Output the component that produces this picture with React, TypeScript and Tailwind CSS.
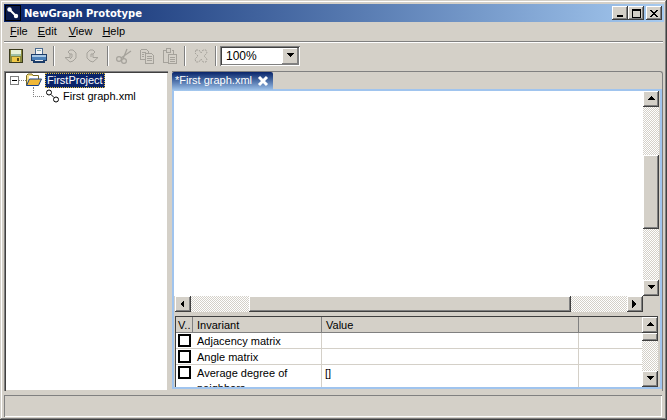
const raised = "shadow-[inset_-1px_-1px_0_#404040,inset_1px_1px_0_#ffffff,inset_-2px_-2px_0_#808080]";

function Arrow({ dir }: { dir: "up" | "down" | "left" | "right" }) {
  const pts = { up: "4,1 0,5 8,5", down: "0,1 8,1 4,5", left: "5,0 5,8 1,4", right: "1,0 1,8 5,4" }[dir];
  return (
    <svg width="8" height="8" viewBox="0 0 8 8" className="block" shapeRendering="crispEdges">
      <polygon points={pts} fill="#000" />
    </svg>
  );
}

function ScrollBtn({ dir }: { dir: "up" | "down" | "left" | "right" }) {
  return (
    <div className={`w-4 h-4 shrink-0 bg-[#d4d0c8] flex items-center justify-center ${raised}`}>
      <Arrow dir={dir} />
    </div>
  );
}

const checker = "bg-[repeating-conic-gradient(#d4d0c8_0_25%,#ffffff_0_50%)] bg-[length:2px_2px]";

function CapBtn({ children, className = "" }: { children: React.ReactNode; className?: string }) {
  return <div className={`w-4 h-[14px] bg-[#d4d0c8] flex items-center justify-center ${raised} ${className}`}>{children}</div>;
}

function Sep() {
  return <div className="w-[2px] h-[20px] mx-[3px] bg-[#808080] border-r border-white" />;
}

function Slot({ children }: { children: React.ReactNode }) {
  return <div className="w-[23px] flex justify-center">{children}</div>;
}

function Save() {
  return (
    <svg width="16" height="16" viewBox="0 0 16 16" shapeRendering="crispEdges">
      <rect x="1.5" y="1.5" width="13" height="13" fill="#8a8a3c" stroke="#3a3a1c" />
      <rect x="3" y="2" width="10" height="4" fill="#e8f0d8" />
      <rect x="3" y="6" width="10" height="2" fill="#9fc0a8" />
      <rect x="4" y="9" width="8" height="5" fill="#f0c848" />
      <rect x="9" y="10" width="2" height="3" fill="#5a4a10" />
    </svg>
  );
}

function Printer() {
  return (
    <svg width="16" height="16" viewBox="0 0 16 16" shapeRendering="crispEdges">
      <rect x="4.5" y="0.5" width="7" height="6" fill="#f4f4f4" stroke="#4a6a90" />
      <rect x="6" y="2" width="4" height="1" fill="#88aaaa" />
      <rect x="0.5" y="6.5" width="15" height="6" fill="#4a80b8" stroke="#1c3c68" />
      <rect x="1" y="7" width="14" height="2" fill="#a8c8e4" />
      <rect x="2" y="12" width="12" height="3" fill="#1c3c68" />
      <rect x="4" y="12" width="8" height="1" fill="#e8e8e8" />
    </svg>
  );
}

const dis = { fill: "none", stroke: "#a5a29b", strokeWidth: 1 };

function Undo() {
  return (
    <svg width="16" height="16" viewBox="0 0 16 16">
      <path d="M8 2 L11 2 L14 5 L14 10 L11 13 L8 14 L3 9.5 L8 9.5 L8 6 L10 6 L10 9 L8 11 M8 2 L6 4 L8 6" {...dis} />
    </svg>
  );
}
function Redo() {
  return (
    <svg width="16" height="16" viewBox="0 0 16 16">
      <path d="M8 2 L5 2 L2 5 L2 10 L5 13 L8 14 L13 9.5 L8 9.5 L8 6 L6 6 L6 9 M8 2 L10 4 L8 6" {...dis} />
    </svg>
  );
}
function Cut() {
  return (
    <svg width="16" height="16" viewBox="0 0 16 16">
      <circle cx="3" cy="11" r="2.4" {...dis} strokeWidth={1.2} />
      <circle cx="8" cy="13" r="2.4" {...dis} strokeWidth={1.2} />
      <path d="M5 10 L15 3 M7 11 L11 1" {...dis} strokeWidth={1.3} />
    </svg>
  );
}
function Copy() {
  return (
    <svg width="16" height="16" viewBox="0 0 16 16" shapeRendering="crispEdges">
      <path d="M1.5 1.5 H7.5 L9.5 3.5 V5.5 M1.5 1.5 V11.5 H6.5 M6.5 5.5 H12.5 L14.5 7.5 V15.5 H6.5 Z M3 4.5 H7 M3 6.5 H5 M3 8.5 H5 M8 8.5 H13 M8 10.5 H13 M8 12.5 H13" {...dis} />
    </svg>
  );
}
function Paste() {
  return (
    <svg width="16" height="16" viewBox="0 0 16 16" shapeRendering="crispEdges">
      <path d="M3.5 2.5 H1.5 V14.5 H6 M9.5 2.5 H11.5 V6 M4.5 0.5 H8.5 V4.5 H4.5 Z M6.5 6.5 H14.5 V15.5 H6.5 Z M8 9.5 H13 M8 11.5 H13 M8 13.5 H13" {...dis} />
    </svg>
  );
}
function Del() {
  return (
    <svg width="16" height="16" viewBox="0 0 16 16">
      <path d="M3 2 L6 2 L8 5 L10 2 L13 2 L14 5 L11 8 L14 11 L13 14 L10 14 L8 11 L6 14 L3 14 L2 11 L5 8 L2 5 Z" fill="none" stroke="#a5a29b" strokeWidth="1" strokeDasharray="2 1" />
    </svg>
  );
}

function Row({ name, value, tall }: { name: string; value?: string; tall?: boolean }) {
  return (
    <div className={`flex shrink-0 border-b border-[#d4d0c8] ${tall ? "h-[32px]" : "h-[16px]"}`}>
      <div className="w-[17px] shrink-0 pl-[2px] pt-[1px]">
        <div className="w-[13px] h-[13px] border-2 border-black bg-white" />
      </div>
      <div className="w-[129px] shrink-0 pl-[4px] pr-2 pt-px border-r border-[#d4d0c8] leading-[15px] overflow-hidden">{name}</div>
      <div className="w-[257px] shrink-0 pl-[3px] pt-[1px] border-r border-[#d4d0c8] leading-[15px]">{value}</div>
      <div className="flex-1" />
    </div>
  );
}

export default function App() {
  return (
    <div className="w-[667px] h-[420px] overflow-hidden bg-[#d4d0c8] text-black text-[11px] font-['Liberation_Sans',Arial,sans-serif] p-[4px] pb-[2px] flex flex-col shadow-[inset_-1px_-1px_0_#404040,inset_1px_1px_0_#d4d0c8,inset_-2px_-2px_0_#808080,inset_2px_2px_0_#ffffff]">
      {/* title bar */}
      <div className="h-[18px] mr-[-1px] shrink-0 flex items-center bg-gradient-to-r from-[#0a246a] to-[#a6caf0] pl-[1px] pr-[2px]">
        <div className="w-[16px] h-[16px] bg-[#0a1a4a] border border-black flex items-center justify-center">
          <svg width="14" height="14" viewBox="0 0 14 14">
            <line x1="3.5" y1="3.5" x2="10" y2="10" stroke="#fff" strokeWidth="2" />
            <circle cx="3.5" cy="3.5" r="2.2" fill="#fff" />
            <circle cx="10" cy="10" r="2.2" fill="#fff" />
          </svg>
        </div>
        <span className="ml-[3px] text-white font-bold text-[10px] font-['DejaVu_Sans',sans-serif]">NewGraph Prototype</span>
        <div className="ml-auto flex">
          <CapBtn>
            <div className="w-[6px] h-[2px] bg-black mt-[6px] mr-[1px]" />
          </CapBtn>
          <CapBtn>
            <div className="w-[9px] h-[9px] border border-black border-t-2" />
          </CapBtn>
          <CapBtn className="ml-[2px]">
            <svg width="8" height="7" viewBox="0 0 8 7" shapeRendering="crispEdges">
              <path d="M0 0 L8 7 M8 0 L0 7" stroke="#000" strokeWidth="1.5" />
            </svg>
          </CapBtn>
        </div>
      </div>

      {/* menu */}
      <div className="h-[20px] shrink-0 flex items-center gap-[10px] pl-[6px] border-b border-[#808080] shadow-[0_1px_0_#ffffff]">
        <span><u>F</u>ile</span>
        <span><u>E</u>dit</span>
        <span className="ml-[2px]"><u>V</u>iew</span>
        <span><u>H</u>elp</span>
      </div>

      {/* toolbar */}
      <div className="h-[27px] shrink-0 flex items-center pt-[1px]">
        <Slot><Save /></Slot>
        <Slot><Printer /></Slot>
        <Sep />
        <Slot><Undo /></Slot>
        <Slot><Redo /></Slot>
        <Sep />
        <Slot><Cut /></Slot>
        <Slot><Copy /></Slot>
        <Slot><Paste /></Slot>
        <Sep />
        <Slot><Del /></Slot>
        <Sep />
        <div className="w-[80px] h-[20px] bg-white flex items-center pl-[6px] shadow-[inset_1px_1px_0_#808080,inset_-1px_-1px_0_#ffffff,inset_2px_2px_0_#404040,inset_-2px_-2px_0_#808080] relative text-[12px]">
          100%
          <div className="absolute right-[2px] top-[2px] w-[16px] h-[16px] bg-[#d4d0c8] flex items-center justify-center shadow-[inset_-1px_-1px_0_#808080,inset_1px_1px_0_#ffffff]">
            <Arrow dir="down" />
          </div>
        </div>
      </div>

      {/* main */}
      <div className="flex-1 min-h-0 flex gap-[4px] pt-[2px]">
        {/* tree */}
        <div className="w-[164px] shrink-0 h-[320px] bg-white pl-[6px] pt-[1px] shadow-[inset_1px_1px_0_#808080,inset_2px_2px_0_#404040,inset_-1px_-1px_0_#d4d0c8] relative">
          <div className="absolute left-[29px] top-[16px] h-[10px] w-[11px] border-l border-b border-dotted border-[#808080]" />
          <div className="flex items-center h-[16px]">
            <div className="w-[9px] h-[9px] border border-[#808080] bg-white flex items-center justify-center">
              <div className="w-[5px] h-px bg-black" />
            </div>
            <div className="w-[7px] border-t border-dotted border-[#808080]" />
            <svg width="16" height="14" viewBox="0 0 16 14" className="mr-[3px]">
              <path d="M0.5 12.5 V2.5 L2 1 H6 L7 2.5 H12.5 V6" fill="#f8e088" stroke="#7a6a20" />
              <rect x="3" y="3" width="9" height="3" fill="#ffffff" />
              <path d="M0.5 12.5 L3.5 6 H15.5 L12.5 12.5 Z" fill="#f0b838" stroke="#14408a" />
            </svg>
            <span className="bg-[#0a246a] text-white px-[2px] h-[15px] leading-[14px] outline-1 outline-dotted outline-[#e0c040] -outline-offset-1">FirstProject</span>
          </div>
          <div className="flex items-center h-[16px] pl-[35px] relative z-10">
            <svg width="15" height="14" viewBox="0 0 15 14" className="mr-[3px] bg-white">
              <circle cx="4" cy="3.5" r="2.5" fill="none" stroke="#000" />
              <circle cx="11" cy="10.5" r="2.5" fill="none" stroke="#000" />
              <line x1="6" y1="5.5" x2="9" y2="8.5" stroke="#000" />
            </svg>
            <span>First graph.xml</span>
          </div>
        </div>

        {/* tab pane */}
        <div className="flex-1 min-w-0 h-[320px] flex flex-col border-t border-r border-[#808080] rounded-tr-[3px]">
          <div className="h-[19px] shrink-0 border-b-2 border-[#a0c4ee]">
            <div className="w-[101px] h-[19px] rounded-t-[2px] bg-gradient-to-b from-[#0a246a] to-[#a6caf0] text-white flex items-center pl-[3px] pb-[2px] whitespace-nowrap">
              *First graph.xml
              <svg width="12" height="12" viewBox="0 0 12 12" className="ml-[5px]">
                <path d="M2 2 L10 10 M10 2 L2 10" stroke="#fff" strokeWidth="3" />
              </svg>
            </div>
          </div>
          <div className="h-[298px] shrink-0 border-x-2 border-b-2 border-[#a0c4ee] flex flex-col">
            <div className="flex-1 min-h-0 flex">
              <div className="flex-1 bg-white" />
              <div className="w-[16px] flex flex-col mr-px">
                <ScrollBtn dir="up" />
                <div className={`h-[48px] ${checker}`} />
                <div className={`h-[74px] bg-[#d4d0c8] ${raised}`} />
                <div className={`flex-1 ${checker}`} />
                <ScrollBtn dir="down" />
              </div>
            </div>
            <div className="h-[16px] shrink-0 flex pr-[17px]">
              <div className="w-[1px]" />
              <ScrollBtn dir="left" />
              <div className={`w-[58px] ${checker}`} />
              <div className={`w-[322px] bg-[#d4d0c8] ${raised}`} />
              <div className={`flex-1 ${checker}`} />
              <ScrollBtn dir="right" />
            </div>
            <div className="h-[4px] shrink-0" />
            <div className="h-[71px] shrink-0 flex ml-[1px] mr-[2px] pt-[1px] pl-[1px] shadow-[inset_1px_1px_0_#404040]">
              <div className="flex-1 min-w-0 flex flex-col overflow-hidden bg-white">
                <div className="h-[16px] shrink-0 flex bg-[#d4d0c8] border-b border-[#808080]">
                  <div className="w-[17px] shrink-0 pl-[2px] pt-px border-r border-[#808080] leading-[14px]">V..</div>
                  <div className="w-[129px] shrink-0 pl-[4px] pt-px border-r border-[#808080] leading-[14px]">Invariant</div>
                  <div className="w-[257px] shrink-0 pl-[4px] pt-px border-r border-[#808080] leading-[14px]">Value</div>
                </div>
                <Row name="Adjacency matrix" />
                <Row name="Angle matrix" />
                <Row name="Average degree of neighbors" value="[]" tall />
              </div>
              <div className="w-[16px] shrink-0 flex flex-col">
                <ScrollBtn dir="up" />
                <div className={`h-[8px] bg-[#d4d0c8] ${raised}`} />
                <div className={`flex-1 ${checker}`} />
                <ScrollBtn dir="down" />
              </div>
            </div>
          </div>
        </div>
      </div>

      {/* status */}
      <div className="h-[22px] shrink-0 mb-[1px] mr-[1px] shadow-[inset_1px_1px_0_#808080,inset_-1px_-1px_0_#ffffff]" />
    </div>
  );
}
